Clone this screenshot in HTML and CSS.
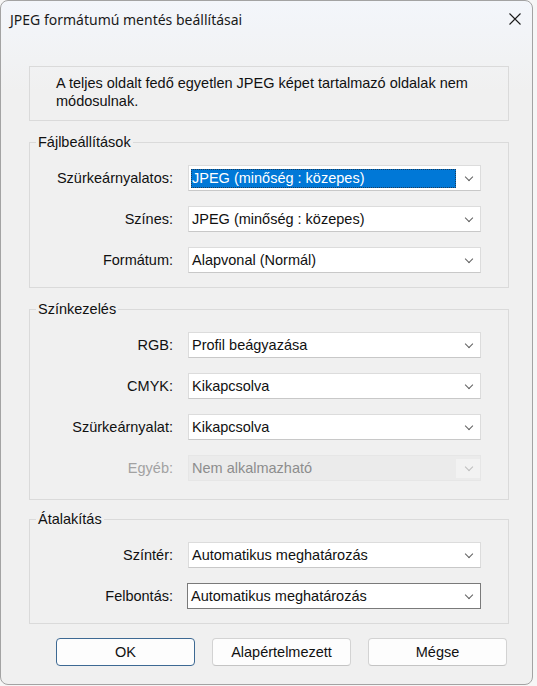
FILE: index.html
```html
<!DOCTYPE html>
<html lang="hu">
<head>
    <meta charset="UTF-8">
    <meta name="viewport" content="width=device-width, initial-scale=1.0">
    <title>JPEG formátumú mentés beállításai</title>
    <link rel="stylesheet" href="styles.css">
</head>
<body>

<div class="window">
    <div class="titlebar">
        <span class="title">JPEG formátumú mentés beállításai</span>
        <span class="close">
            <svg width="12" height="12" viewBox="0 0 12 12"><path d="M0.5 0.5 L11.5 11.5 M11.5 0.5 L0.5 11.5" stroke="#1b1b1b" stroke-width="1.1" fill="none"/></svg>
        </span>
    </div>

    <div class="content">
        <div class="info">A teljes oldalt fedő egyetlen JPEG képet tartalmazó oldalak nem módosulnak.</div>

        <fieldset class="group">
            <legend>Fájlbeállítások</legend>
            <div class="rows">
                <label>Szürkeárnyalatos:</label>
                <div class="combo"><span class="val sel">JPEG (minőség : közepes)</span><i class="arr"></i></div>
                <label>Színes:</label>
                <div class="combo"><span class="val">JPEG (minőség : közepes)</span><i class="arr"></i></div>
                <label>Formátum:</label>
                <div class="combo"><span class="val">Alapvonal (Normál)</span><i class="arr"></i></div>
            </div>
        </fieldset>

        <fieldset class="group g-color">
            <legend>Színkezelés</legend>
            <div class="rows">
                <label>RGB:</label>
                <div class="combo"><span class="val">Profil beágyazása</span><i class="arr"></i></div>
                <label>CMYK:</label>
                <div class="combo"><span class="val">Kikapcsolva</span><i class="arr"></i></div>
                <label>Szürkeárnyalat:</label>
                <div class="combo"><span class="val">Kikapcsolva</span><i class="arr"></i></div>
                <label class="off">Egyéb:</label>
                <div class="combo disabled"><span class="val">Nem alkalmazható</span><i class="arr"></i></div>
            </div>
        </fieldset>

        <fieldset class="group g-conv">
            <legend>Átalakítás</legend>
            <div class="rows">
                <label>Színtér:</label>
                <div class="combo"><span class="val">Automatikus meghatározás</span><i class="arr"></i></div>
                <label>Felbontás:</label>
                <div class="combo focus"><span class="val">Automatikus meghatározás</span><i class="arr"></i></div>
            </div>
        </fieldset>

        <div class="buttons">
            <button class="btn default">OK</button>
            <button class="btn">Alapértelmezett</button>
            <button class="btn">Mégse</button>
        </div>
    </div>
</div>

</body>
</html>
```

FILE: styles.css
```css
* {margin:0;padding:0;box-sizing:border-box;}
html,body {width:100%;height:100%;}
body {background:#f6f6f6;font-family:"Liberation Sans",Arial,sans-serif;font-size:14.5px;color:#111;}

.window{
    width: 533px;
    height: 685px;
    border: 1px solid #a3a3a3;
    border-radius: 8px;
    overflow: hidden;
    background: linear-gradient(#f3f6fb, #f0f0f0 90px);
}
.titlebar{
    height: 36px;
    display: flex;
    align-items: center;
    justify-content: space-between;
    padding: 0 11px 0 9px;
}
.title{
    font-family: "Noto Sans", "Open Sans", sans-serif;
    font-size: 14px;
    color: #1a1a1a;
}
.close svg{display:block;}

.content{
    padding: 29px 0 0 28px;
}
.info{
    width: 480px;
    height: 55px;
    border: 1px solid #dadada;
    padding: 7px 20px 0 26px;
    line-height: 18px;
}

/* csoportok */
.group{
    width: 480px;
    margin-top: 13px;
    border: 1px solid #dadada;
    padding: 14px 0 14px 6px;
}
.group.g-color{
    padding-bottom: 18px;
}
.group.g-conv{
    margin-top: 11px;
}
.group legend{
    padding: 0 2px;
    line-height: 17px;
}
.rows{
    display: grid;
    grid-template-columns: 137px 293px;
    column-gap: 15px;
    row-gap: 15px;
    align-items: center;
}
.rows label{
    text-align: right;
}
.rows label.off{
    color: #a2a2a2;
}

.combo{
    height: 26px;
    display: flex;
    align-items: center;
    background: #fff;
    border: 1px solid #dcdcdc;
    border-bottom-color: #c8c8c8;
    padding: 2px 0 2px 2px;
}
.combo .val{
    flex: 1;
    height: 19px;
    line-height: 19px;
    padding-left: 1px;
    white-space: nowrap;
}
.combo .val.sel{
    background: #0078d7;
    color: #fff;
    outline: 1px dotted #1d3d5c;
    outline-offset: -1px;
}
.combo .arr{
    width: 24px;
    height: 19px;
    position: relative;
}
.combo .arr:after{
    content: "";
    position: absolute;
    left: 10px;
    top: 5px;
    width: 5px;
    height: 5px;
    border-right: 1px solid #606060;
    border-bottom: 1px solid #606060;
    transform: rotate(45deg);
}
.combo.disabled{
    background: #ebebeb;
    border-color: #e6e6e6;
    color: #8d8d8d;
}
.combo.disabled .arr{
    background: #f2f2f2;
}
.combo.disabled .arr:after{
    border-color: #bdbdbd;
}
.combo.focus{
    border-color: #7a7a7a;
    margin-left: -1px;
}

/* gombok */
.buttons{
    width: 480px;
    display: flex;
    justify-content: flex-end;
    gap: 17px;
    padding: 14px 2px 0 0;
}
.btn{
    width: 139px;
    height: 28px;
    font-family: "Liberation Sans", Arial, sans-serif;
    font-size: 14.5px;
    color: #111;
    background: #fdfdfd;
    border: 1px solid #d3d3d3;
    border-bottom-color: #c4c4c4;
    border-radius: 4px;
}
.btn.default{
    border: 1px solid #3d6993;
}
```
